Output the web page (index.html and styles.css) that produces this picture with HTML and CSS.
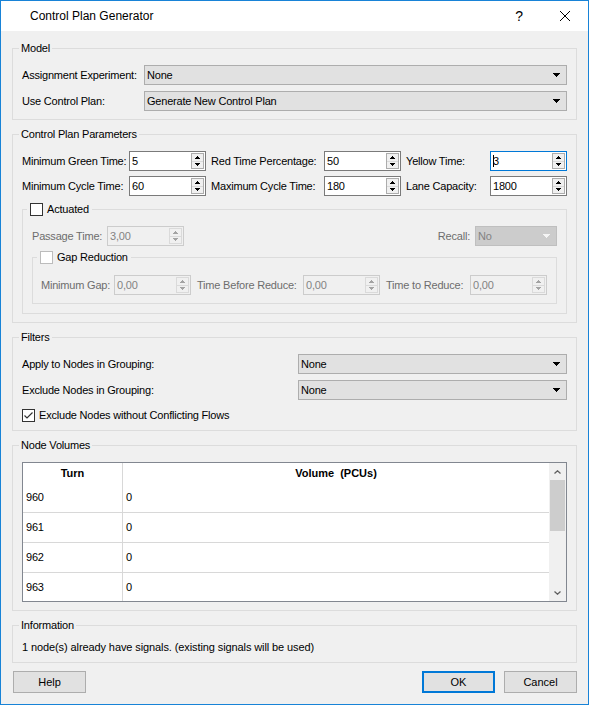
FILE: index.html
```html
<!DOCTYPE html>
<html lang="en">
<head>
<meta charset="utf-8">
<title>Control Plan Generator</title>
<link rel="stylesheet" href="styles.css">
</head>
<body>
<div class="window">
  <header class="titlebar">
    <span class="title">Control Plan Generator</span>
    <div class="caption">
      <span class="caption-btn help-btn">?</span>
      <span class="caption-btn close-btn">
        <svg width="10" height="10" viewBox="0 0 10 10"><path d="M0 0L10 10M10 0L0 10" stroke="#000" stroke-width="1" fill="none"/></svg>
      </span>
    </div>
  </header>

  <main class="content">
    <!-- Model -->
    <fieldset class="group">
      <legend>Model</legend>
      <div class="model-grid">
        <span class="lbl">Assignment Experiment:</span>
        <div class="combo">
          <span class="combo-text">None</span>
          <svg class="combo-arrow" width="7" height="4" viewBox="0 0 7 4"><path d="M0 0h7v1H6v1H5v1H4v1H3V3H2V2H1V1H0z"/></svg>
        </div>
        <span class="lbl">Use Control Plan:</span>
        <div class="combo">
          <span class="combo-text">Generate New Control Plan</span>
          <svg class="combo-arrow" width="7" height="4" viewBox="0 0 7 4"><path d="M0 0h7v1H6v1H5v1H4v1H3V3H2V2H1V1H0z"/></svg>
        </div>
      </div>
    </fieldset>

    <!-- Control plan parameters -->
    <fieldset class="group">
      <legend>Control Plan Parameters</legend>
      <div class="params-grid">
        <span class="lbl">Minimum Green Time:</span>
        <div class="spin"><span class="spin-text">5</span><span class="spin-btns"><span class="spin-btn"><svg width="5" height="3" viewBox="0 0 5 3"><path d="M2 0h1v1h1v1h1v1H0V2h1V1h1z"/></svg></span><span class="spin-btn"><svg width="5" height="3" viewBox="0 0 5 3"><path d="M0 0h5v1H4v1H3v1H2V2H1V1H0z"/></svg></span></span></div>
        <span class="lbl lbl-pad">Red Time Percentage:</span>
        <div class="spin"><span class="spin-text">50</span><span class="spin-btns"><span class="spin-btn"><svg width="5" height="3" viewBox="0 0 5 3"><path d="M2 0h1v1h1v1h1v1H0V2h1V1h1z"/></svg></span><span class="spin-btn"><svg width="5" height="3" viewBox="0 0 5 3"><path d="M0 0h5v1H4v1H3v1H2V2H1V1H0z"/></svg></span></span></div>
        <span class="lbl lbl-pad">Yellow Time:</span>
        <div class="spin focused"><span class="spin-text"><span class="caret"></span>3</span><span class="spin-btns"><span class="spin-btn"><svg width="5" height="3" viewBox="0 0 5 3"><path d="M2 0h1v1h1v1h1v1H0V2h1V1h1z"/></svg></span><span class="spin-btn"><svg width="5" height="3" viewBox="0 0 5 3"><path d="M0 0h5v1H4v1H3v1H2V2H1V1H0z"/></svg></span></span></div>

        <span class="lbl">Minimum Cycle Time:</span>
        <div class="spin"><span class="spin-text">60</span><span class="spin-btns"><span class="spin-btn"><svg width="5" height="3" viewBox="0 0 5 3"><path d="M2 0h1v1h1v1h1v1H0V2h1V1h1z"/></svg></span><span class="spin-btn"><svg width="5" height="3" viewBox="0 0 5 3"><path d="M0 0h5v1H4v1H3v1H2V2H1V1H0z"/></svg></span></span></div>
        <span class="lbl lbl-pad">Maximum Cycle Time:</span>
        <div class="spin"><span class="spin-text">180</span><span class="spin-btns"><span class="spin-btn"><svg width="5" height="3" viewBox="0 0 5 3"><path d="M2 0h1v1h1v1h1v1H0V2h1V1h1z"/></svg></span><span class="spin-btn"><svg width="5" height="3" viewBox="0 0 5 3"><path d="M0 0h5v1H4v1H3v1H2V2H1V1H0z"/></svg></span></span></div>
        <span class="lbl lbl-pad">Lane Capacity:</span>
        <div class="spin"><span class="spin-text">1800</span><span class="spin-btns"><span class="spin-btn"><svg width="5" height="3" viewBox="0 0 5 3"><path d="M2 0h1v1h1v1h1v1H0V2h1V1h1z"/></svg></span><span class="spin-btn"><svg width="5" height="3" viewBox="0 0 5 3"><path d="M0 0h5v1H4v1H3v1H2V2H1V1H0z"/></svg></span></span></div>
      </div>

      <fieldset class="group sub actuated">
        <legend class="check-legend">
          <span class="checkbox"></span><span>Actuated</span>
        </legend>
        <div class="passage-row">
          <span class="lbl disabled passage-lbl">Passage Time:</span>
          <div class="spin is-disabled"><span class="spin-text">3,00</span><span class="spin-btns"><span class="spin-btn"><svg width="5" height="3" viewBox="0 0 5 3"><path d="M2 0h1v1h1v1h1v1H0V2h1V1h1z"/></svg></span><span class="spin-btn"><svg width="5" height="3" viewBox="0 0 5 3"><path d="M0 0h5v1H4v1H3v1H2V2H1V1H0z"/></svg></span></span></div>
          <span class="lbl disabled recall-lbl">Recall:</span>
          <div class="combo is-disabled recall-combo">
            <span class="combo-text">No</span>
            <svg class="combo-arrow" width="7" height="4" viewBox="0 0 7 4"><path d="M0 0h7v1H6v1H5v1H4v1H3V3H2V2H1V1H0z"/></svg>
          </div>
        </div>

        <fieldset class="group sub gapred">
          <legend class="check-legend">
            <span class="checkbox is-disabled"></span><span>Gap Reduction</span>
          </legend>
          <div class="gap-grid">
            <span class="lbl disabled">Minimum Gap:</span>
            <div class="spin is-disabled"><span class="spin-text">0,00</span><span class="spin-btns"><span class="spin-btn"><svg width="5" height="3" viewBox="0 0 5 3"><path d="M2 0h1v1h1v1h1v1H0V2h1V1h1z"/></svg></span><span class="spin-btn"><svg width="5" height="3" viewBox="0 0 5 3"><path d="M0 0h5v1H4v1H3v1H2V2H1V1H0z"/></svg></span></span></div>
            <span class="lbl disabled lbl-pad6">Time Before Reduce:</span>
            <div class="spin is-disabled"><span class="spin-text">0,00</span><span class="spin-btns"><span class="spin-btn"><svg width="5" height="3" viewBox="0 0 5 3"><path d="M2 0h1v1h1v1h1v1H0V2h1V1h1z"/></svg></span><span class="spin-btn"><svg width="5" height="3" viewBox="0 0 5 3"><path d="M0 0h5v1H4v1H3v1H2V2H1V1H0z"/></svg></span></span></div>
            <span class="lbl disabled lbl-pad6">Time to Reduce:</span>
            <div class="spin is-disabled"><span class="spin-text">0,00</span><span class="spin-btns"><span class="spin-btn"><svg width="5" height="3" viewBox="0 0 5 3"><path d="M2 0h1v1h1v1h1v1H0V2h1V1h1z"/></svg></span><span class="spin-btn"><svg width="5" height="3" viewBox="0 0 5 3"><path d="M0 0h5v1H4v1H3v1H2V2H1V1H0z"/></svg></span></span></div>
          </div>
        </fieldset>
      </fieldset>
    </fieldset>

    <!-- Filters -->
    <fieldset class="group filters">
      <legend>Filters</legend>
      <div class="filters-grid">
        <span class="lbl">Apply to Nodes in Grouping:</span>
        <div class="combo">
          <span class="combo-text">None</span>
          <svg class="combo-arrow" width="7" height="4" viewBox="0 0 7 4"><path d="M0 0h7v1H6v1H5v1H4v1H3V3H2V2H1V1H0z"/></svg>
        </div>
        <span class="lbl">Exclude Nodes in Grouping:</span>
        <div class="combo">
          <span class="combo-text">None</span>
          <svg class="combo-arrow" width="7" height="4" viewBox="0 0 7 4"><path d="M0 0h7v1H6v1H5v1H4v1H3V3H2V2H1V1H0z"/></svg>
        </div>
      </div>
      <div class="check-row">
        <span class="checkbox checked">
          <svg width="11" height="11" viewBox="0 0 11 11"><path d="M1.5 5.5L4 8L9.5 2.5" stroke="#333" stroke-width="1.2" fill="none"/></svg>
        </span>
        <span>Exclude Nodes without Conflicting Flows</span>
      </div>
    </fieldset>

    <!-- Node volumes -->
    <fieldset class="group volumes">
      <legend>Node Volumes</legend>
      <div class="tableview">
        <div class="table-body">
          <div class="trow thead">
            <span class="cell c-turn">Turn</span>
            <span class="cell">Volume&nbsp; (PCUs)</span>
          </div>
          <div class="trow"><span class="cell c-turn">960</span><span class="cell">0</span></div>
          <div class="trow"><span class="cell c-turn">961</span><span class="cell">0</span></div>
          <div class="trow"><span class="cell c-turn">962</span><span class="cell">0</span></div>
          <div class="trow"><span class="cell c-turn">963</span><span class="cell">0</span></div>
        </div>
        <div class="vscroll">
          <span class="sb-arrow">
            <svg width="7" height="4" viewBox="0 0 7 4"><path d="M0.5 3.5L3.5 0.8L6.5 3.5" stroke="#606060" stroke-width="1.3" fill="none"/></svg>
          </span>
          <div class="sb-track"><span class="sb-thumb"></span></div>
          <span class="sb-arrow">
            <svg width="7" height="4" viewBox="0 0 7 4"><path d="M0.5 0.5L3.5 3.2L6.5 0.5" stroke="#606060" stroke-width="1.3" fill="none"/></svg>
          </span>
        </div>
      </div>
    </fieldset>

    <!-- Information -->
    <fieldset class="group info">
      <legend>Information</legend>
      <p class="info-text">1 node(s) already have signals. (existing signals will be used)</p>
    </fieldset>

    <div class="buttons">
      <button class="btn help">Help</button>
      <button class="btn default">OK</button>
      <button class="btn">Cancel</button>
    </div>
  </main>
</div>
</body>
</html>
```

FILE: styles.css
```css
* { box-sizing: border-box; }

html, body {
  margin: 0;
  padding: 0;
}

body {
  width: 589px;
  height: 705px;
  overflow: hidden;
  background: #f0f0f0;
  color: #000;
  font: 11px/13px "Liberation Sans", Arial, sans-serif;
  letter-spacing: -0.2px;
}

/* ---- window frame ---- */
.window {
  width: 589px;
  height: 705px;
  border: 1px solid #1883d7;
  background: #f0f0f0;
  display: flex;
  flex-direction: column;
}

.titlebar {
  height: 30px;
  flex: none;
  background: #fff;
  display: flex;
  align-items: center;
}

.title {
  margin-left: 29px;
  font-size: 12px;
  line-height: 14px;
  letter-spacing: 0;
}

.caption {
  margin-left: auto;
  display: flex;
  height: 100%;
}

.caption-btn {
  width: 46px;
  height: 30px;
  display: flex;
  align-items: center;
  justify-content: center;
}

.help-btn {
  font-size: 14px;
  line-height: 14px;
}

/* ---- dialog body ---- */
.content {
  flex: 1;
  padding: 11px 11px 0;
  display: flex;
  flex-direction: column;
  gap: 8px;
}

.group {
  margin: 0;
  min-width: 0;
  padding: 10px 9px 8px;
  border: 1px solid #dcdcdc;
}

.group > legend {
  padding: 0 2px;
  margin-left: -3px;
  line-height: 13px;
}

.lbl {
  white-space: nowrap;
  line-height: 13px;
}

.lbl.disabled { color: #6d6d6d; }
.lbl-pad { padding-left: 5px; }
.lbl-pad6 { padding-left: 6px; }

/* ---- combo box ---- */
.combo {
  height: 20px;
  border: 1px solid #adadad;
  background: #e1e1e1;
  display: flex;
  align-items: center;
  padding-left: 2px;
}

.combo-text { flex: 1; white-space: nowrap; }

.combo-arrow {
  flex: none;
  margin-right: 6px;
  fill: #000;
}

.combo.is-disabled {
  background: #cccccc;
  border-color: #bfbfbf;
  color: #838383;
}

.combo.is-disabled .combo-arrow { fill: #f4f4f4; }

/* ---- spin box ---- */
.spin {
  width: 77px;
  height: 20px;
  border: 1px solid #7a7a7a;
  background: #fff;
  display: flex;
}

.spin-text {
  flex: 1;
  padding-left: 2px;
  display: flex;
  align-items: center;
  white-space: nowrap;
}

.spin-btns {
  flex: none;
  width: 13px;
  margin: 1px 1px 1px 0;
  border: 1px solid #acacac;
  background: #f0f0f0;
  display: flex;
  flex-direction: column;
}

.spin-btn {
  flex: 1;
  display: flex;
  align-items: center;
  justify-content: center;
  fill: #000;
}

.spin-btn + .spin-btn { border-top: 1px solid #dadada; }

.spin.focused { border-color: #0078d7; }

.caret {
  display: inline-block;
  width: 1px;
  height: 12px;
  background: #000;
  margin-right: -1px;
}

.spin.is-disabled {
  border-color: #cccccc;
  background: #f0f0f0;
  color: #838383;
}

.spin.is-disabled .spin-btns { border-color: #dadada; }
.spin.is-disabled .spin-btn { fill: #a3a3a3; }

/* ---- checkbox ---- */
.checkbox {
  width: 13px;
  height: 13px;
  flex: none;
  border: 1px solid #333;
  background: #fff;
  display: inline-flex;
  align-items: center;
  justify-content: center;
}

.checkbox.is-disabled { border-color: #bcbcbc; }

.group > legend.check-legend {
  display: flex;
  align-items: center;
  gap: 4px;
  padding: 0 3px;
  margin-left: -5px;
}

/* ---- model ---- */
.model-grid {
  display: grid;
  grid-template-columns: 122px 1fr;
  row-gap: 6px;
  align-items: center;
}

/* ---- parameters ---- */
.params-grid {
  display: grid;
  grid-template-columns: 107px 77px 118px 77px 89px 77px;
  row-gap: 5px;
  align-items: center;
}

.actuated {
  margin-top: 7px;
  padding: 10px 9px 9px;
}

.passage-row {
  display: flex;
  align-items: center;
}

.passage-lbl { width: 75px; }

.recall-lbl {
  margin-left: auto;
  margin-right: 5px;
}

.recall-combo { width: 82px; }

.gapred {
  margin-top: 5px;
  padding: 11px 8px 8px;
}

.gapred > legend.check-legend { margin-left: -4px; }

.gap-grid {
  display: grid;
  grid-template-columns: 73px 77px 112px 77px 90px 77px;
  align-items: center;
}

/* ---- filters ---- */
.filters { padding: 10px 9px 8px; }

.filters-grid {
  display: grid;
  grid-template-columns: 276px 1fr;
  row-gap: 6px;
  align-items: center;
}

.check-row {
  margin-top: 9px;
  display: flex;
  align-items: center;
  gap: 4px;
}

/* ---- node volumes table ---- */
.tableview {
  height: 140px;
  border: 1px solid #828790;
  background: #fff;
  display: flex;
  overflow: hidden;
}

.table-body {
  flex: 1;
  overflow: hidden;
}

.trow {
  display: grid;
  grid-template-columns: 100px 1fr;
  height: 30px;
  border-bottom: 1px solid #d8d8d8;
}

.trow.thead {
  height: 20px;
  border-bottom: none;
  font-weight: bold;
  letter-spacing: 0;
}

.cell {
  display: flex;
  align-items: center;
  padding-left: 3px;
  white-space: nowrap;
}

.cell.c-turn { border-right: 1px solid #d8d8d8; }

.thead .cell {
  justify-content: center;
  padding-left: 0;
}

.vscroll {
  width: 17px;
  flex: none;
  background: #f0f0f0;
  display: flex;
  flex-direction: column;
}

.sb-arrow {
  height: 17px;
  flex: none;
  display: flex;
  align-items: center;
  justify-content: center;
}

.sb-track { flex: 1; }

.sb-thumb {
  display: block;
  height: 51px;
  margin: 0 1px;
  background: #cdcdcd;
}

/* ---- information ---- */
.info { padding: 9px 9px 8px; }

.info-text {
  margin: 0;
  line-height: 13px;
  letter-spacing: -0.1px;
}

/* ---- dialog buttons ---- */
.buttons {
  display: flex;
  gap: 9px;
}

.btn {
  width: 73px;
  height: 22px;
  margin: 0;
  padding: 0;
  border: 1px solid #adadad;
  background: #e1e1e1;
  color: #000;
  font: inherit;
  letter-spacing: 0;
}

.btn.help {
  margin-left: 1px;
  margin-right: auto;
}

.btn.default { border: 2px solid #0078d7; }
```
